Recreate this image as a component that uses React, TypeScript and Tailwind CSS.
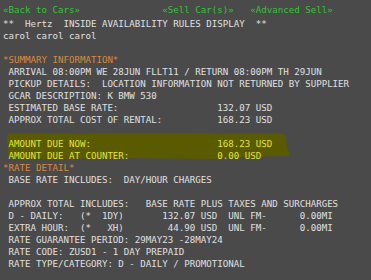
const lines: { text: string; tone?: 'link' | 'head' | 'hi' }[] = [
  { text: '**  Hertz  INSIDE AVAILABILITY RULES DISPLAY  **' },
  { text: 'carol carol carol' },
  { text: '' },
  { text: '*SUMMARY INFORMATION*', tone: 'head' },
  { text: ' ARRIVAL 08:00PM WE 28JUN FLLT11 / RETURN 08:00PM TH 29JUN' },
  { text: ' PICKUP DETAILS:  LOCATION INFORMATION NOT RETURNED BY SUPPLIER' },
  { text: ' GCAR DESCRIPTION: K BMW 530' },
  { text: ' ESTIMATED BASE RATE:                  132.07 USD' },
  { text: ' APPROX TOTAL COST OF RENTAL:          168.23 USD' },
  { text: '' },
];

const after: { text: string; tone?: 'head' }[] = [
  { text: '*RATE DETAIL*', tone: 'head' },
  { text: ' BASE RATE INCLUDES:  DAY/HOUR CHARGES' },
  { text: '' },
  { text: ' APPROX TOTAL INCLUDES:   BASE RATE PLUS TAXES AND SURCHARGES' },
  { text: ' D - DAILY:   (*  1DY)       132.07 USD  UNL FM-      0.00MI' },
  { text: ' EXTRA HOUR:  (*   XH)        44.90 USD  UNL FM-      0.00MI' },
  { text: ' RATE GUARANTEE PERIOD: 29MAY23 -28MAY24' },
  { text: ' RATE CODE: ZUSD1 - 1 DAY PREPAID' },
  { text: ' RATE TYPE/CATEGORY: D - DAILY / PROMOTIONAL' },
];

function Line({ text, tone }: { text: string; tone?: string }) {
  const color =
    tone === 'head' ? 'text-[#d98a3c]' : tone === 'hi' ? 'text-[#e4e43c]' : 'text-[#e0e0e0]';
  return <div className={`h-[12px] whitespace-pre ${color}`}>{text || ' '}</div>;
}

export default function App() {
  return (
    <div className="h-[280px] w-[371px] overflow-hidden bg-[#4a4a4a] px-[3px] pt-[4px] font-['DejaVu_Sans_Mono',monospace] text-[9.15px] leading-[12px]">
      {/* nav links */}
      <div className="flex h-[14px] whitespace-pre text-[#35c235]">
        <span>«Back to Cars»</span>
        <span>{'               '}</span>
        <span>«Sell Car(s)»</span>
        <span>{'   '}</span>
        <span>«Advanced Sell»</span>
      </div>

      {lines.map((l, i) => (
        <Line key={i} {...l} />
      ))}

      {/* marker highlight */}
      <div className="relative">
        <svg className="absolute left-[4px] top-[-5px] h-[28px] w-[286px]" viewBox="0 0 286 28">
          <path
            d="M3 1 L150 0 L276 1 Q279 2 279 6 L280 14 L283 21 Q282 23 278 23 L232 24 L205 26 L120 25 L40 26 L4 25 Q1 24 1 20 L0 5 Q0 1 3 1 Z"
            fill="#5a5a00"
          />
        </svg>
        <div className="relative">
          <Line text=" AMOUNT DUE NOW:                       168.23 USD" tone="hi" />
          <Line text=" AMOUNT DUE AT COUNTER:                0.00 USD" tone="hi" />
        </div>
      </div>

      {after.map((l, i) => (
        <Line key={i} {...l} />
      ))}
    </div>
  );
}
